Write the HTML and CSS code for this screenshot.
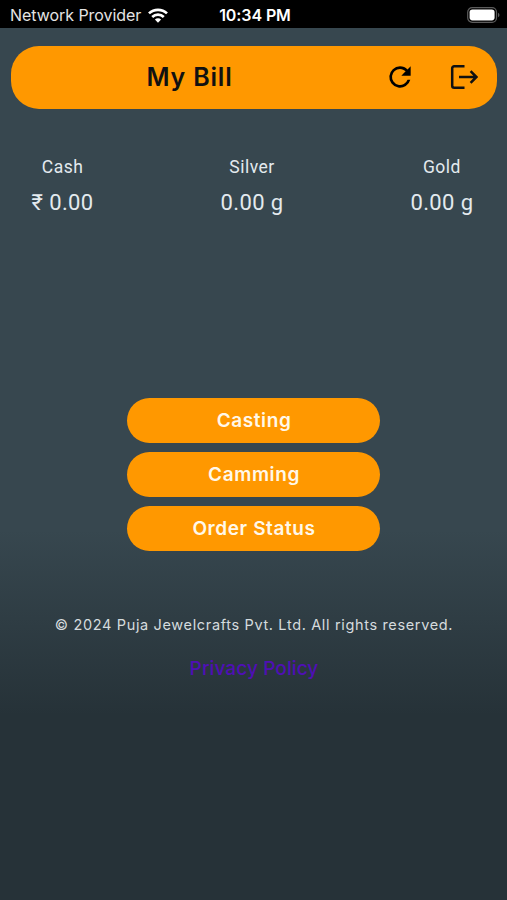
FILE: index.html
```html
<!DOCTYPE html>
<html lang="en">

<head>
    <meta charset="UTF-8">
    <meta name="viewport" content="width=device-width, initial-scale=1">
    <title>My Bill</title>
    <link rel="stylesheet" href="styles.css">
</head>

<body>
    <div class="status-bar">
        <div class="carrier">
            <span>Network Provider</span>
            <svg class="wifi" width="20" height="15" viewBox="0 0 20 15" fill="none" stroke="#fff" stroke-width="2.7">
                <path d="M1 5.4a13 13 0 0 1 18 0" />
                <path d="M4.2 8.9a8.4 8.4 0 0 1 11.6 0" />
                <path d="M10 14.7L6.9 11.6a4.4 4.4 0 0 1 6.2 0z" fill="#fff" stroke="none" />
            </svg>
        </div>
        <div class="time">10:34 PM</div>
        <svg class="battery" width="33" height="16" viewBox="0 0 33 16">
            <rect x="0.7" y="0.7" width="28.8" height="14.6" rx="4.5" fill="none" stroke="#5c5c5c" stroke-width="1.2" />
            <rect x="2.6" y="2.6" width="25" height="10.8" rx="2.8" fill="#fff" />
            <path d="M31 5.7v4.6q1.5-.8 1.5-2.3t-1.5-2.3z" fill="#5c5c5c" />
        </svg>
    </div>

    <header class="app-bar">
        <h1>My Bill</h1>
        <div class="actions">
            <svg width="32" height="32" viewBox="0 0 24 24">
                <path d="M17.65 6.35A7.96 7.96 0 0 0 12 4a8 8 0 1 0 7.73 10h-2.08A6 6 0 1 1 12 6c1.66 0 3.14.69 4.22 1.78L13 11h7V4l-2.35 2.35z" />
            </svg>
            <svg width="28" height="26" viewBox="0 0 28 26" fill="none" stroke="#111" stroke-width="2.5">
                <path d="M14.5 2.2H4.2a2 2 0 0 0-2 2v17.6a2 2 0 0 0 2 2h10.3" />
                <path d="M9 13h17.5M20.6 7.2l5.8 5.8-5.8 5.8" />
            </svg>
        </div>
    </header>

    <div class="balances">
        <div class="balance">
            <div class="label">Cash</div>
            <div class="value">₹ 0.00</div>
        </div>
        <div class="balance">
            <div class="label">Silver</div>
            <div class="value">0.00 g</div>
        </div>
        <div class="balance">
            <div class="label">Gold</div>
            <div class="value">0.00 g</div>
        </div>
    </div>

    <div class="menu">
        <button class="btn">Casting</button>
        <button class="btn">Camming</button>
        <button class="btn">Order Status</button>
    </div>

    <footer>
        <p class="copyright">© 2024 Puja Jewelcrafts Pvt. Ltd. All rights reserved.</p>
        <a class="privacy" href="#">Privacy Policy</a>
    </footer>
</body>

</html>
```

FILE: styles.css
```css
* {
    box-sizing: border-box;
}

html,
body {
    height: 100%;
    margin: 0;
}

body {
    background: linear-gradient(#37474f 530px, #263238 715px);
    color: #e3eaee;
    font-family: Inter, "Liberation Sans", sans-serif;
    overflow: hidden;
}

.status-bar {
    display: grid;
    grid-template-columns: 1fr auto 1fr;
    align-items: center;
    height: 28px;
    padding: 0 7px 0 10px;
    background: #000;
    color: #fff;
    font-size: 16px;
    line-height: 28px;
}

.carrier {
    display: flex;
    align-items: center;
    gap: 7px;
    padding-top: 1px;
    color: #e4e4e4;
    letter-spacing: -0.05px;
    white-space: nowrap;
}

.time {
    padding-top: 1px;
    font-weight: 600;
    letter-spacing: -0.1px;
}

.battery {
    justify-self: end;
}

.app-bar {
    display: flex;
    align-items: center;
    justify-content: space-between;
    height: 63px;
    margin: 17.5px 10.5px 0 11px;
    padding: 0 19px 0 135.5px;
    border-radius: 28px;
    background: #ff9800;
    color: #111;
}

h1 {
    margin: 0;
    font-size: 25px;
    font-weight: 600;
    letter-spacing: 0.8px;
}

.actions {
    display: flex;
    align-items: center;
    gap: 34px;
}

.actions svg {
    display: block;
}

.balances {
    display: flex;
    justify-content: space-between;
    margin-top: 47px;
    padding: 0 33.5px 0 31.5px;
    font-family: Roboto, "Liberation Sans", sans-serif;
    text-align: center;
}

.label {
    font-size: 17.5px;
    line-height: 22px;
    letter-spacing: 0.5px;
}

.value {
    margin-top: 12px;
    font-size: 22px;
    line-height: 26px;
    letter-spacing: 0.4px;
}

.menu {
    display: flex;
    flex-direction: column;
    align-items: center;
    gap: 9.5px;
    margin-top: 182.5px;
}

.btn {
    width: 253px;
    height: 44.5px;
    padding: 1px 0 0 1px;
    border: 0;
    border-radius: 23px;
    background: #ff9800;
    color: #fff8ea;
    font: 600 19px Inter, "Liberation Sans", sans-serif;
    letter-spacing: 0.6px;
}

footer {
    margin-top: 63px;
    padding-left: 1px;
    text-align: center;
}

.copyright {
    margin: 0 0 22px;
    color: #d5dbde;
    font-size: 14.5px;
    line-height: 21px;
    letter-spacing: 0.65px;
}

.privacy {
    color: #4f0fb5;
    font-size: 19px;
    font-weight: 500;
    letter-spacing: 0.1px;
    text-decoration: none;
}
```
